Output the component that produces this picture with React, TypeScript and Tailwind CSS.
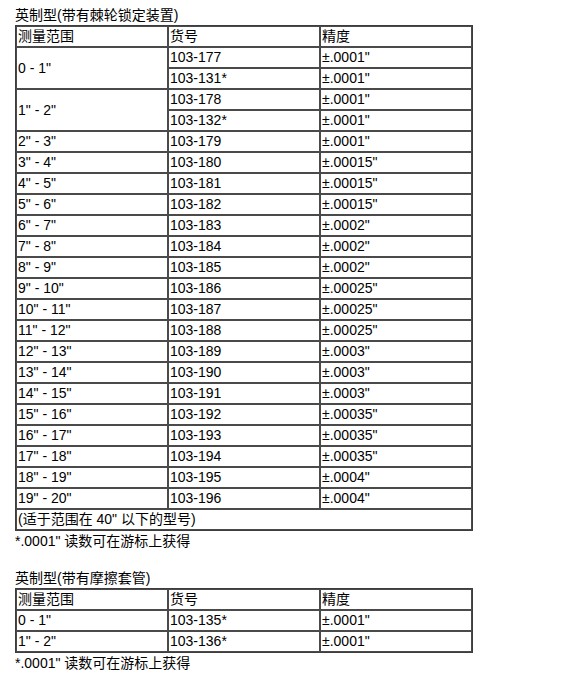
const rows1: { range: string; items: [string, string][] }[] = [
  { range: '0 - 1"', items: [["103-177", '±.0001"'], ["103-131*", '±.0001"']] },
  { range: '1" - 2"', items: [["103-178", '±.0001"'], ["103-132*", '±.0001"']] },
  { range: '2" - 3"', items: [["103-179", '±.0001"']] },
  { range: '3" - 4"', items: [["103-180", '±.00015"']] },
  { range: '4" - 5"', items: [["103-181", '±.00015"']] },
  { range: '5" - 6"', items: [["103-182", '±.00015"']] },
  { range: '6" - 7"', items: [["103-183", '±.0002"']] },
  { range: '7" - 8"', items: [["103-184", '±.0002"']] },
  { range: '8" - 9"', items: [["103-185", '±.0002"']] },
  { range: '9" - 10"', items: [["103-186", '±.00025"']] },
  { range: '10" - 11"', items: [["103-187", '±.00025"']] },
  { range: '11" - 12"', items: [["103-188", '±.00025"']] },
  { range: '12" - 13"', items: [["103-189", '±.0003"']] },
  { range: '13" - 14"', items: [["103-190", '±.0003"']] },
  { range: '14" - 15"', items: [["103-191", '±.0003"']] },
  { range: '15" - 16"', items: [["103-192", '±.00035"']] },
  { range: '16" - 17"', items: [["103-193", '±.00035"']] },
  { range: '17" - 18"', items: [["103-194", '±.00035"']] },
  { range: '18" - 19"', items: [["103-195", '±.0004"']] },
  { range: '19" - 20"', items: [["103-196", '±.0004"']] },
];

const rows2: { range: string; items: [string, string][] }[] = [
  { range: '0 - 1"', items: [["103-135*", '±.0001"']] },
  { range: '1" - 2"', items: [["103-136*", '±.0001"']] },
];

const cell = "h-[21px] w-[152px] border border-[#4a4a4a] px-px py-0 text-left align-middle leading-[19px]";

function SpecTable({ rows, note }: { rows: typeof rows1; note?: string }) {
  return (
    <table className="w-[458px] table-fixed border-separate border-spacing-0 border border-[#3d3d3d]">
      <tbody>
        <tr>
          <td className={cell}>测量范围</td>
          <td className={cell}>货号</td>
          <td className={cell}>精度</td>
        </tr>
        {rows.map((r) =>
          r.items.map(([no, acc], i) => (
            <tr key={no}>
              {i === 0 && (
                <td className={cell} rowSpan={r.items.length}>
                  {r.range}
                </td>
              )}
              <td className={cell}>{no}</td>
              <td className={cell}>{acc}</td>
            </tr>
          ))
        )}
        {note && (
          <tr>
            <td className={cell} colSpan={3}>
              {note}
            </td>
          </tr>
        )}
      </tbody>
    </table>
  );
}

export default function App() {
  return (
    <div
      className="min-h-[683px] w-[585px] bg-white pl-[15px] pt-[5px] text-[14px] text-black"
      style={{ fontFamily: '"Liberation Sans", Arial, "Noto Sans CJK SC", sans-serif' }}
    >
      <div className="h-[20px] leading-[20px]">英制型(带有棘轮锁定装置)</div>
      <SpecTable rows={rows1} note={'(适于范围在 40" 以下的型号)'} />
      <div className="h-[20px] leading-[20px]">*.0001" 读数可在游标上获得</div>
      <div className="mt-[17px] h-[20px] leading-[20px]">英制型(带有摩擦套管)</div>
      <SpecTable rows={rows2} />
      <div className="h-[20px] leading-[20px]">*.0001" 读数可在游标上获得</div>
    </div>
  );
}
